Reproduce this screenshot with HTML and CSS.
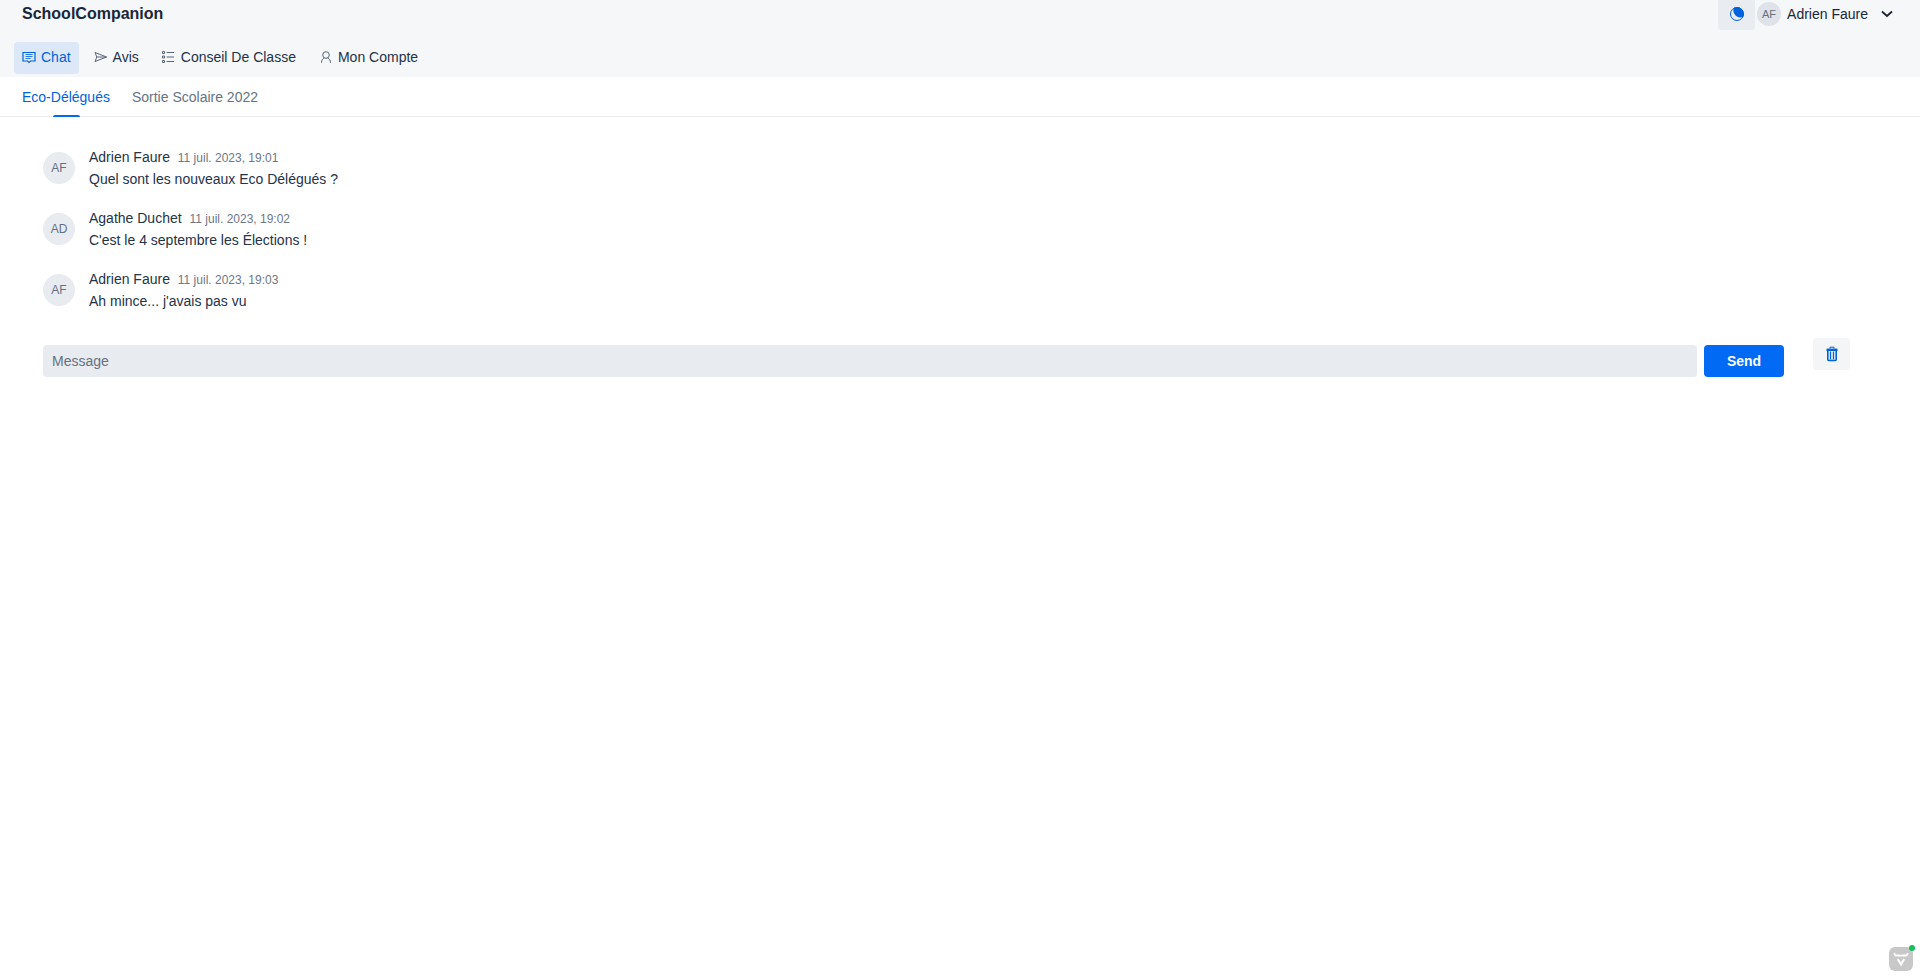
FILE: index.html
```html
<!DOCTYPE html>
<html lang="fr">
<head>
    <meta charset="UTF-8">
    <meta name="viewport" content="width=device-width, initial-scale=1.0">
    <title>SchoolCompanion</title>
    <link rel="stylesheet" href="styles.css">
</head>
<body>
    <header class="header">
        <div class="topbar">
            <h1 class="brand">SchoolCompanion</h1>
            <div class="account">
                <button type="button" class="theme-button" aria-label="Thème">
                    <svg width="14" height="14" viewBox="0 0 14 14">
                        <circle cx="7" cy="7" r="6.5" fill="none" stroke="#0062df" stroke-width="1"/>
                        <path d="M4 .7A7 7 0 0 1 13.3 9.8A7 7 0 0 1 4 .7z" fill="#0062df"/>
                    </svg>
                </button>
                <button type="button" class="user-menu">
                    <span class="avatar avatar-small">AF</span>
                    <span>Adrien Faure</span>
                    <svg class="chevron" width="12" height="8" viewBox="0 0 12 8" fill="none" stroke="#1a2433" stroke-width="1.8">
                        <path d="M1 1.5l5 4.5 5-4.5"/>
                    </svg>
                </button>
            </div>
        </div>
        <nav class="nav">
            <a href="#" class="nav-link active">
                <svg width="14" height="14" viewBox="0 0 14 14" fill="none" stroke="currentColor">
                    <path d="M1 2.500h12v8.500H8.500L7 12.500 5.500 11H1z" stroke-width="1.200"/>
                    <path d="M3.500 4.500h7M3.500 6.500h7M3.500 8.500h5" opacity=".8"/>
                </svg>
                Chat
            </a>
            <a href="#" class="nav-link">
                <svg width="14" height="14" viewBox="0 0 14 14" fill="none" stroke="#5b677a">
                    <path d="M1 2.500l11.500 4.500L1 11.500 2.800 7zM2.800 7h9.700"/>
                </svg>
                Avis
            </a>
            <a href="#" class="nav-link">
                <svg width="14" height="14" viewBox="0 0 14 14" fill="none" stroke="#5b677a">
                    <path d="M4.500 2.500H12M4.500 7H12M4.500 11.500H12"/>
                    <path d="M.5 1.500h2v2h-2zM.5 6h2v2h-2zM.5 10.500h2v2h-2z"/>
                </svg>
                Conseil De Classe
            </a>
            <a href="#" class="nav-link">
                <svg width="14" height="14" viewBox="0 0 14 14" fill="none" stroke="#5b677a">
                    <circle cx="7" cy="5" r="3.300"/>
                    <path d="M2.500 12.800c0-2.600 1.200-4.200 3-4.900M11.500 12.800c0-2.600-1.200-4.200-3-4.900"/>
                </svg>
                Mon Compte
            </a>
        </nav>
    </header>

    <nav class="tabs">
        <a href="#" class="tab active">Eco-Délégués</a>
        <a href="#" class="tab">Sortie Scolaire 2022</a>
    </nav>

    <main class="chat">
        <ul class="messages">
            <li class="message">
                <span class="avatar">AF</span>
                <div>
                    <div class="message-head">Adrien Faure <time>11 juil. 2023, 19:01</time></div>
                    <p class="message-text">Quel sont les nouveaux Eco Délégués ?</p>
                </div>
            </li>
            <li class="message">
                <span class="avatar">AD</span>
                <div>
                    <div class="message-head">Agathe Duchet <time>11 juil. 2023, 19:02</time></div>
                    <p class="message-text">C'est le 4 septembre les Élections !</p>
                </div>
            </li>
            <li class="message">
                <span class="avatar">AF</span>
                <div>
                    <div class="message-head">Adrien Faure <time>11 juil. 2023, 19:03</time></div>
                    <p class="message-text">Ah mince... j'avais pas vu</p>
                </div>
            </li>
        </ul>
        <div class="composer">
            <form class="send-form">
                <input type="text" class="message-input" placeholder="Message" aria-label="Message">
                <button type="submit" class="send-button">Send</button>
            </form>
            <button type="button" class="delete-button" aria-label="Supprimer">
                <svg width="12" height="16" viewBox="0 0 12 16" fill="none" stroke="#0062df">
                    <path d="M4 2.500V1.200h4v1.300" stroke-width="1"/>
                    <path d="M.5 3.800h11" stroke-width="2.400"/>
                    <path d="M1.800 5v8.500q0 1 1 1h6.400q1 0 1-1V5" stroke-width="1.600"/>
                    <path d="M4.500 5.500v8M7.500 5.500v8" stroke-width="1.300"/>
                </svg>
            </button>
        </div>
    </main>

    <button type="button" class="devtools" aria-label="Vaadin">
        <svg width="24" height="24" viewBox="0 0 24 24" fill="none" stroke="#fff" stroke-width="2">
            <path d="M5.500 6v.8q0 1.700 1.700 1.700h3.300q1.500 0 1.500 1 0-1 1.500-1h3.300q1.700 0 1.700-1.700V6" stroke-width="1.800"/>
            <path d="M8.800 12l3.200 5.500 3.200-5.500"/>
        </svg>
        <span class="status-dot"></span>
    </button>
</body>
</html>
```

FILE: styles.css
```css
* {
    margin: 0;
    padding: 0;
    box-sizing: border-box;
}

body {
    background: #fff;
    color: #243348;
    font-family: 'Liberation Sans', Arial, sans-serif;
    font-size: 14px;
    line-height: 20px;
}

button {
    border: none;
    border-radius: 4px;
    font: inherit;
    color: inherit;
    cursor: pointer;
}

a {
    color: inherit;
    text-decoration: none;
}

.header {
    background: #f5f7f9;
    padding-bottom: 3px;
}

.topbar {
    display: flex;
    justify-content: space-between;
    align-items: center;
    height: 28px;
    padding: 0 27px 0 22px;
}

.brand {
    font-size: 16px;
    line-height: 20px;
    color: #1a2639;
}

.account {
    display: flex;
    align-items: center;
    gap: 2px;
}

.theme-button {
    display: flex;
    align-items: center;
    justify-content: center;
    width: 37px;
    height: 32px;
    background: #e9ecf1;
}

.user-menu {
    display: flex;
    align-items: center;
    gap: 6px;
    background: none;
    color: #1a2639;
}

.chevron {
    margin-left: 7px;
}

.avatar {
    display: flex;
    align-items: center;
    justify-content: center;
    width: 32px;
    height: 32px;
    border-radius: 50%;
    background: #e8ebef;
    color: #66717f;
    font-size: 12px;
}

.avatar-small {
    width: 24px;
    height: 24px;
    background: #dfe3e9;
    font-size: 11px;
}

.nav {
    display: flex;
    gap: 7px;
    padding: 14px 14px 0;
}

.nav-link {
    display: flex;
    align-items: center;
    gap: 5px;
    height: 32px;
    padding: 0 8px 2px;
    border-radius: 4px;
}

.nav-link.active {
    background: #dce8f8;
    color: #0062df;
}

.tabs {
    display: flex;
    gap: 22px;
    padding: 0 22px;
    border-bottom: 1px solid #e8ebef;
}

.tab {
    position: relative;
    padding: 10px 0 9px;
    color: #677384;
}

.tab.active {
    color: #0062df;
}

.tab.active::after {
    content: "";
    position: absolute;
    left: 50%;
    bottom: -1px;
    width: 27px;
    height: 2px;
    margin-left: -13px;
    border-radius: 2px 2px 0 0;
    background: #006af5;
}

.chat {
    padding: 21px 70px 0 43px;
}

.messages {
    list-style: none;
}

.message {
    display: flex;
    gap: 14px;
    padding: 8px 0;
}

.message .avatar {
    margin-top: 6px;
}

.message-head {
    line-height: 22px;
}

.message-head time {
    margin-left: 4px;
    color: #6c7786;
    font-size: 12px;
    line-height: 12px;
}

.message-text {
    line-height: 23px;
}

.composer {
    display: flex;
    align-items: flex-start;
    gap: 29px;
    padding-top: 17px;
}

.send-form {
    display: flex;
    flex: 1;
    gap: 7px;
    padding-top: 7px;
}

.message-input {
    flex: 1;
    height: 32px;
    padding: 0 9px;
    border: none;
    border-radius: 4px;
    background: #e8ebef;
    color: inherit;
    font: inherit;
}

.message-input::placeholder {
    color: #66717f;
}

.send-button {
    width: 80px;
    height: 32px;
    background: #006af5;
    color: #fff;
    font-weight: bold;
}

.delete-button {
    display: flex;
    align-items: center;
    justify-content: center;
    width: 37px;
    height: 32px;
    background: #f3f5f7;
}

/* floating badge in the corner */
.devtools {
    position: fixed;
    right: 7px;
    bottom: 6px;
    width: 24px;
    height: 24px;
    border-radius: 6px;
    background: #c8c8c8;
}

.status-dot {
    position: absolute;
    top: -2px;
    right: -2px;
    width: 6px;
    height: 6px;
    border-radius: 50%;
    background: #16c05c;
}
```
